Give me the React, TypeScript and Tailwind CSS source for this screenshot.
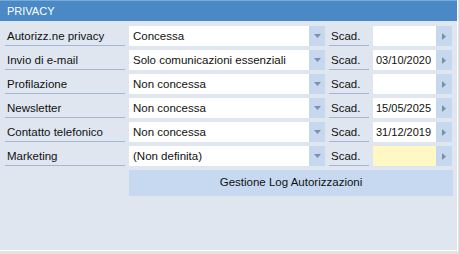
import React from 'react';

const rows = [
  { label: 'Autorizz.ne privacy', value: 'Concessa', date: '', yellow: false },
  { label: 'Invio di e-mail', value: 'Solo comunicazioni essenziali', date: '03/10/2020', yellow: false },
  { label: 'Profilazione', value: 'Non concessa', date: '', yellow: false },
  { label: 'Newsletter', value: 'Non concessa', date: '15/05/2025', yellow: false },
  { label: 'Contatto telefonico', value: 'Non concessa', date: '31/12/2019', yellow: false },
  { label: 'Marketing', value: '(Non definita)', date: '', yellow: true },
];

function DownArrow() {
  return (
    <svg width="7" height="4" viewBox="0 0 7 4">
      <path d="M0 0h7L3.5 4z" fill="#7d8ea6" />
    </svg>
  );
}

function RightArrow() {
  return (
    <svg width="4" height="7" viewBox="0 0 4 7">
      <path d="M0 0v7l4-3.5z" fill="#7d8ea6" />
    </svg>
  );
}

export default function App() {
  return (
    <div className="w-[459px] h-[254px] bg-[#e4e4e4] text-[#111] text-[11.5px]" style={{ fontFamily: '"Liberation Sans", Arial, sans-serif' }}>
      <div className="w-[458px] h-[251px] bg-[#dfe6f0] border-r border-b border-white">
        <div className="h-[21px] bg-[#4a89c5] border-t border-[#7aa9d6] text-white px-[7px] leading-[20px] text-[11px]">PRIVACY</div>

        <div className="flex flex-col gap-[4px] pt-[5px] pl-[5px]">
          {rows.map((r) => (
            <div key={r.label} className="flex h-[20px]">
              <div className="w-[120px] h-[20px] border-b border-[#a3b8d6] pl-[2px] leading-[21px]">{r.label}</div>
              <div className="w-[180px] ml-[4px] bg-white pl-[4px] leading-[20px]">{r.value}</div>
              <div className="w-[16px] bg-[#c6d8ee] flex items-center justify-center">
                <DownArrow />
              </div>
              <div className="w-[40px] h-[20px] ml-[4px] border-b border-[#a3b8d6] pl-[2px] leading-[21px]">Scad.</div>
              <div className={`w-[63px] ml-[4px] pl-[3px] leading-[20px] text-[11px] ${r.yellow ? 'bg-[#fff8c4]' : 'bg-white'}`}>{r.date}</div>
              <div className="w-[16px] bg-[#c6d8ee] flex items-center justify-center">
                <RightArrow />
              </div>
            </div>
          ))}

          <div className="ml-[124px] w-[324px] h-[26px] bg-[#c6d9f1] flex items-center justify-center">
            Gestione Log Autorizzazioni
          </div>
        </div>
      </div>
    </div>
  );
}
